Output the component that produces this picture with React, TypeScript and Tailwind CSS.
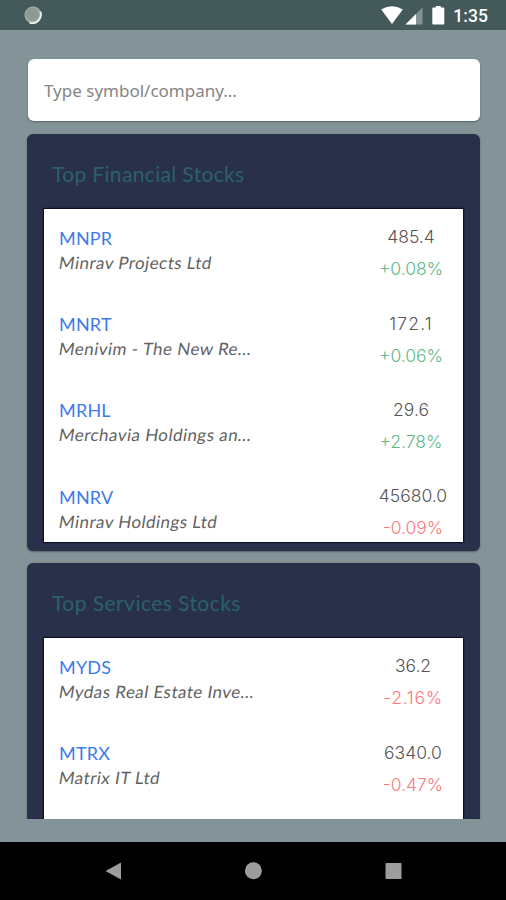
type Stock = {
  symbol: string;
  name: string;
  price: string;
  change: string;
  priceClass?: string;
  changeClass?: string;
};

const financial: Stock[] = [
  { symbol: "MNPR", name: "Minrav Projects Ltd", price: "485.4", change: "+0.08%" },
  { symbol: "MNRT", name: "Menivim - The New Re...", price: "172.1", change: "+0.06%", priceClass: "tracking-[1.2px]" },
  { symbol: "MRHL", name: "Merchavia Holdings an...", price: "29.6", change: "+2.78%" },
  { symbol: "MNRV", name: "Minrav Holdings Ltd", price: "45680.0", change: "-0.09%" },
];

const services: Stock[] = [
  { symbol: "MYDS", name: "Mydas Real Estate Inve...", price: "36.2", change: "-2.16%", changeClass: "tracking-[0.7px]" },
  { symbol: "MTRX", name: "Matrix IT Ltd", price: "6340.0", change: "-0.47%" },
];

function StatusBar() {
  return (
    <header className="flex h-[30px] shrink-0 items-center justify-between bg-[#43595a] pl-[23.5px] pr-[18px]">
      <svg width="18" height="18" viewBox="0 0 18 18">
        <circle cx="9" cy="9" r="8.5" fill="#a3b0ab" />
        <path d="M16.3 5.5A8.5 8.5 0 0 1 5.5 16.6" fill="none" stroke="#edf2ef" strokeWidth="1.8" />
        <circle cx="8.4" cy="8.2" r="6.8" fill="#8b9b97" />
      </svg>
      <div className="flex items-center">
        <svg width="64" height="20" viewBox="0 0 64 20" fill="#fff">
          <path d="M.2 4.600Q11-2.200 21.800 4.600L11 19Z" />
          <path d="M41.500 2.500v17h-17Z" fill="#849391" />
          <path d="M35 9V19.500H24.500Z" />
          <path d="M54.800 1h5v1.500H62.300q1 0 1 1V18.500q0 1-1 1H52.300q-1 0-1-1V3.500q0-1 1-1h2.500Z" />
        </svg>
        <span className="ml-2 pt-px font-[Roboto] text-[17.5px] font-medium leading-5 tracking-[0.1px] text-white">1:35</span>
      </div>
    </header>
  );
}

function StockRow({ stock }: { stock: Stock }) {
  const down = stock.change.startsWith("-");
  return (
    <li className="flex h-[86.2px] shrink-0 justify-between pl-[15px]">
      <div className="pt-[17px]">
        <div className="font-[Lato] text-[18px] leading-6 tracking-[0.2px] text-[#3d7be8]">{stock.symbol}</div>
        <div className="origin-left -skew-x-[9deg] whitespace-nowrap font-[Lato] text-[17px] leading-[26.4px] tracking-[0.45px] text-[#626262]">
          {stock.name}
        </div>
      </div>
      <div
        className={`flex w-[76px] shrink-0 flex-col items-center pt-[15.4px] font-[Inter] text-[17.5px] font-light ${down ? "mr-3" : "mr-3.5"}`}
      >
        <span className={`leading-[25px] text-[#555] ${stock.priceClass ?? ""}`}>{stock.price}</span>
        <span className={`mt-[7px] leading-[25px] ${stock.changeClass ?? ""} ${down ? "text-[#f8797e]" : "text-[#5fb888]"}`}>
          {stock.change}
        </span>
      </div>
    </li>
  );
}

function StockList({ stocks, className }: { stocks: Stock[]; className: string }) {
  return (
    <ul className={`flex flex-col overflow-hidden bg-white shadow-[0_0_1px_1px_#080d28] ${className}`}>
      {stocks.map((s) => (
        <StockRow key={s.symbol} stock={s} />
      ))}
    </ul>
  );
}

export default function App() {
  return (
    <div className="flex h-[900px] w-[506px] flex-col overflow-hidden bg-[#839397]">
      <StatusBar />
      <main className="flex h-[789px] shrink-0 flex-col overflow-hidden pl-7 pr-[26px] pt-[29px]">
        <div className="flex h-[62px] shrink-0 items-center rounded-md bg-white pl-4 pt-0.5 shadow-[0_1px_2px_#53646a]">
          <span className="font-['Noto_Sans'] text-[17px] text-[#858585]">Type symbol/company...</span>
        </div>
        <section className="-ml-px mt-[13px] h-[417px] shrink-0 rounded-md bg-[#29304a] px-[17px] shadow-[0_1px_2px_#53646a]">
          <h2 className="h-[75px] pl-2 pt-[26px] font-[Lato] text-[21px] leading-7 tracking-[0.35px] text-[#2b606c]">Top Financial Stocks</h2>
          <StockList stocks={financial} className="h-[333px]" />
        </section>
        <section className="-ml-px mt-3 h-[256px] shrink-0 rounded-t-md bg-[#29304a] px-[17px] shadow-[0_1px_2px_#53646a]">
          <h2 className="h-[75px] pl-2 pt-[26px] font-[Lato] text-[21px] leading-7 tracking-[0.45px] text-[#2b606c]">Top Services Stocks</h2>
          <StockList stocks={services} className="h-[181px]" />
        </section>
      </main>
      <div className="h-[23px] shrink-0" />
      <nav className="h-[58px] shrink-0 bg-black">
        <svg width="506" height="58" viewBox="0 0 506 58" fill="#9d9d9d">
          <path d="M105.500 29 121 20.500V37.500Z" />
          <circle cx="253.400" cy="28.700" r="8.500" />
          <rect x="385.500" y="21" width="16" height="16" rx=".7" />
        </svg>
      </nav>
    </div>
  );
}
